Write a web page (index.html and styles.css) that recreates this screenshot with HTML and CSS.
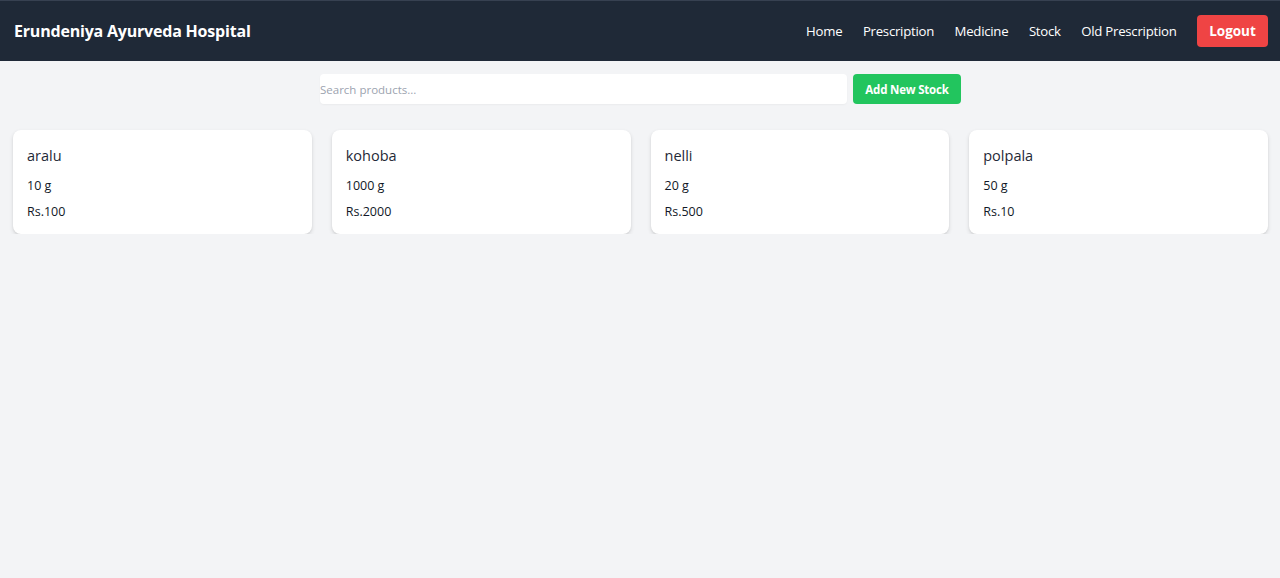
FILE: index.html
```html
<!DOCTYPE html>
<html lang="en">
<head>
<meta charset="utf-8">
<title>Stock</title>
<link rel="stylesheet" href="styles.css">
</head>
<body>
<nav class="navbar">
  <div class="brand">Erundeniya Ayurveda Hospital</div>
  <div class="nav-links">
    <a href="#" class="nav-link">Home</a>
    <a href="#" class="nav-link">Prescription</a>
    <a href="#" class="nav-link">Medicine</a>
    <a href="#" class="nav-link">Stock</a>
    <a href="#" class="nav-link">Old Prescription</a>
    <button class="logout">Logout</button>
  </div>
</nav>
<main class="content">
  <div class="toolbar">
    <input class="search" type="text" placeholder="Search products...">
    <button class="add-btn">Add New Stock</button>
  </div>
  <div class="grid">
    <div class="card">
      <div class="card-title">aralu</div>
      <div class="card-line">10 g</div>
      <div class="card-line">Rs.100</div>
    </div>
    <div class="card">
      <div class="card-title">kohoba</div>
      <div class="card-line">1000 g</div>
      <div class="card-line">Rs.2000</div>
    </div>
    <div class="card">
      <div class="card-title">nelli</div>
      <div class="card-line">20 g</div>
      <div class="card-line">Rs.500</div>
    </div>
    <div class="card">
      <div class="card-title">polpala</div>
      <div class="card-line">50 g</div>
      <div class="card-line">Rs.10</div>
    </div>
  </div>
</main>
</body>
</html>
```
FILE: styles.css
```css
* { box-sizing: border-box; }
html, body {
  margin: 0;
  padding: 0;
  background: #f3f4f6;
  font-family: "Open Sans", "Noto Sans", sans-serif;
  color: #1f2937;
}
.navbar {
  height: 61px;
  background: #1f2937;
  border-top: 1px solid #374151;
  display: flex;
  align-items: center;
  justify-content: space-between;
  padding: 0 12px 0 14px;
}
.brand {
  color: #fff;
  font-weight: 700;
  font-size: 16px;
  letter-spacing: -0.2px;
}
.nav-links {
  display: flex;
  align-items: center;
  gap: 20.5px;
}
.nav-link {
  color: #fff;
  text-decoration: none;
  font-size: 13.2px;
  letter-spacing: -0.25px;
}
.logout {
  background: #ef4444;
  color: #fff;
  border: none;
  border-radius: 4px;
  font-family: inherit;
  font-weight: 700;
  font-size: 13.5px;
  width: 71px;
  height: 32px;
  padding: 0;
}
.content {
  padding: 13px 12px 0 13px;
}
.toolbar {
  display: flex;
  justify-content: center;
  gap: 6px;
}
.search {
  width: 527px;
  height: 30px;
  border: none;
  border-radius: 4px;
  background: #fff;
  padding: 0;
  font-family: inherit;
  font-size: 11.5px;
  outline: none;
  box-shadow: 0 1px 2px rgba(0,0,0,0.04);
}
.search::placeholder { color: #9ca3af; }
.add-btn {
  width: 108px;
  height: 30px;
  border: none;
  border-radius: 4px;
  background: #22c55e;
  color: #fff;
  font-family: inherit;
  font-weight: 700;
  font-size: 11.5px;
  letter-spacing: -0.2px;
  padding: 0;
}
.grid {
  margin-top: 26px;
  display: grid;
  grid-template-columns: repeat(4, 1fr);
  gap: 20px;
}
.card {
  background: #fff;
  border-radius: 8px;
  box-shadow: 0 2px 4px rgba(0,0,0,0.12), 0 1px 2px rgba(0,0,0,0.06);
  height: 104px;
  padding: 16px 14px;
}
.card-title {
  font-size: 14.5px;
  font-weight: 500;
  color: #1f2937;
  line-height: 20px;
  margin-bottom: 11px;
}
.card-line {
  font-size: 12.5px;
  font-weight: 500;
  color: #111827;
  line-height: 18px;
}
.card-line + .card-line {
  margin-top: 8px;
}
```
